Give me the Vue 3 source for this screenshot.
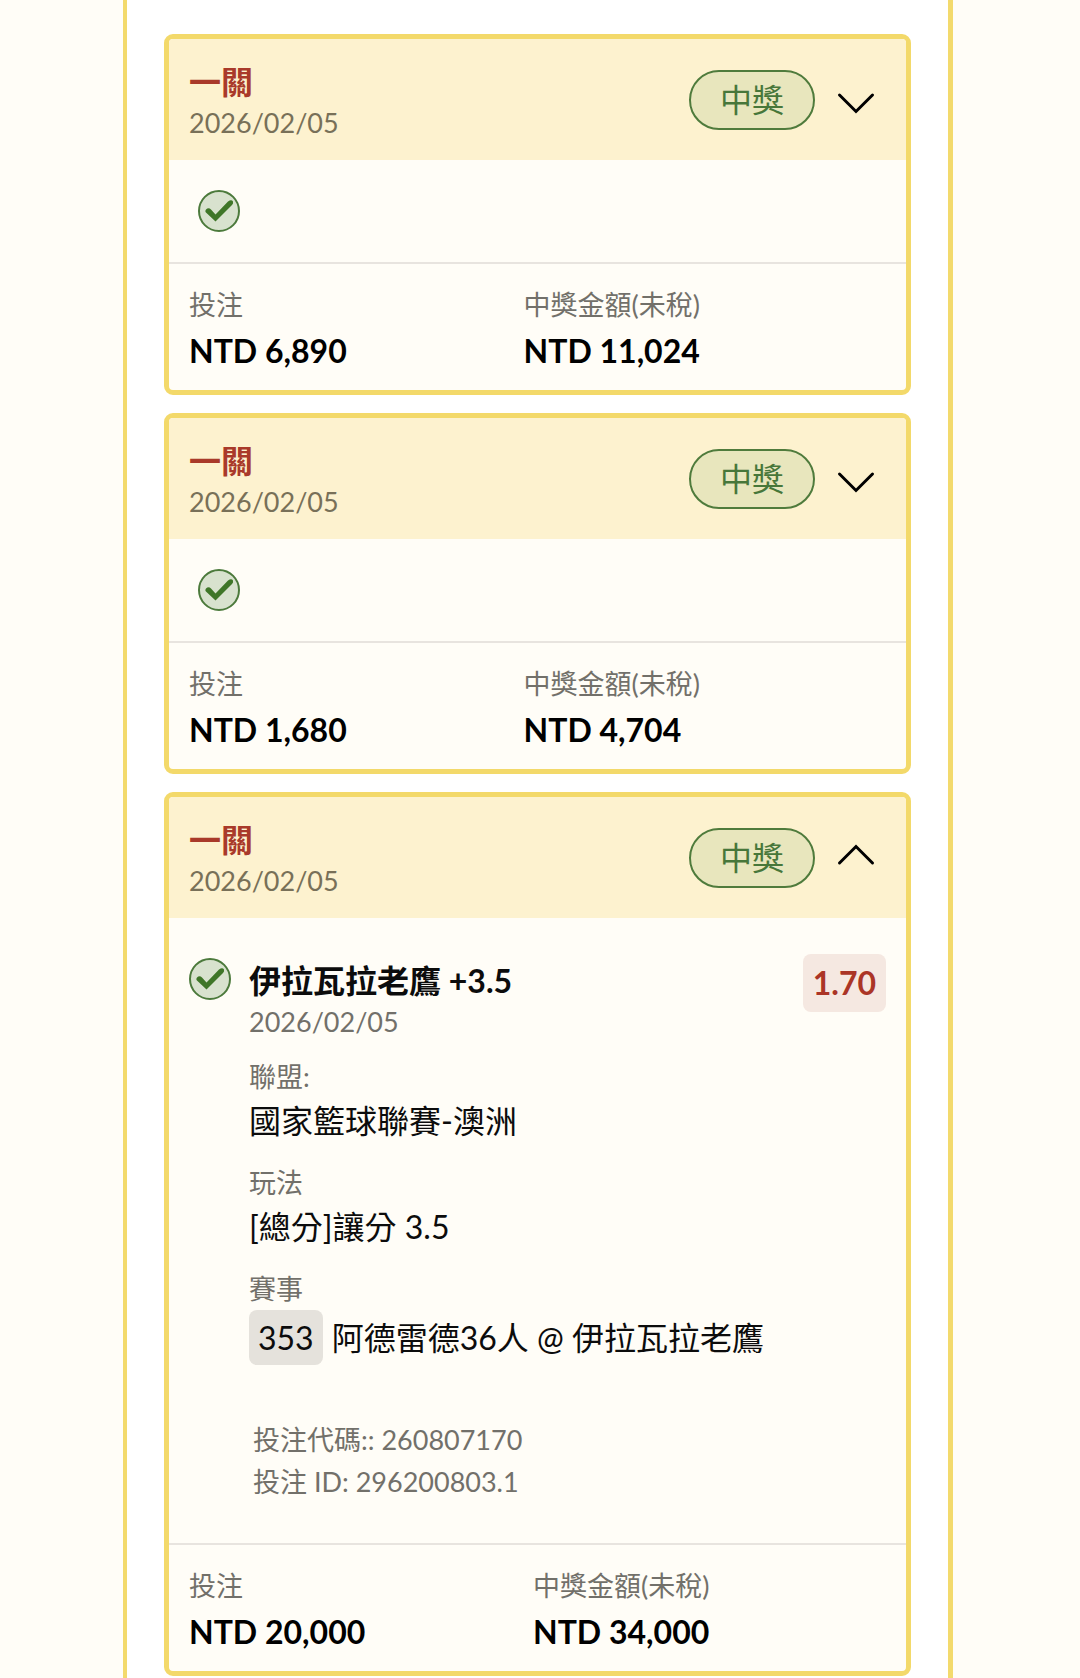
<script setup>
import { ref } from 'vue'

const bets = ref([
  { id: 1, title: '一關', date: '2026/02/05', status: '中獎', stake: 'NTD 6,890', payout: 'NTD 11,024', open: false },
  { id: 2, title: '一關', date: '2026/02/05', status: '中獎', stake: 'NTD 1,680', payout: 'NTD 4,704', open: false },
  {
    id: 3,
    title: '一關',
    date: '2026/02/05',
    status: '中獎',
    stake: 'NTD 20,000',
    payout: 'NTD 34,000',
    open: true,
    detail: {
      pick: '伊拉瓦拉老鷹 +3.5',
      date: '2026/02/05',
      odds: '1.70',
      league: '國家籃球聯賽-澳洲',
      market: '[總分]讓分 3.5',
      code: '353',
      match: '阿德雷德36人 @ 伊拉瓦拉老鷹',
      betCode: '260807170',
      betId: '296200803.1'
    }
  }
])
</script>

<template>
  <div class="page">
    <main class="panel">
      <article v-for="bet in bets" :key="bet.id" class="card" :class="{ expanded: bet.open && bet.detail }">
        <header class="head">
          <div class="heading">
            <h2 class="title">{{ bet.title }}</h2>
            <p class="muted">{{ bet.date }}</p>
          </div>
          <span class="status">{{ bet.status }}</span>
          <button class="toggle" type="button" aria-label="展開或收合" :aria-expanded="bet.open" @click="bet.open = !bet.open">
            <svg viewBox="0 0 44 44" width="44" height="44" fill="none" stroke="#000" stroke-width="3" stroke-linecap="round">
              <path d="M5.500 17 22 33.500 38.500 17" />
            </svg>
          </button>
        </header>

        <section class="body">
          <svg class="check" viewBox="0 0 42 42" width="42" height="42" fill="none">
            <circle cx="21" cy="21" r="20" fill="#d8e2ce" stroke="#4c7a3c" stroke-width="2" />
            <path d="M8 19.500Q10.500 17 13 19.500L17.500 24.500 30 11.500Q33.500 9 35 11.500 35.500 13.500 34 15L17.500 31.500 8.500 23Q6.500 21.500 8 19.500Z" fill="#3f7628" />
          </svg>
          <div v-if="bet.open && bet.detail" class="detail">
            <div class="pick-row">
              <div>
                <h3 class="pick">{{ bet.detail.pick }}</h3>
                <p class="muted">{{ bet.detail.date }}</p>
              </div>
              <span class="odds">{{ bet.detail.odds }}</span>
            </div>
            <dl class="facts">
              <div>
                <dt class="muted">聯盟:</dt>
                <dd>{{ bet.detail.league }}</dd>
              </div>
              <div>
                <dt class="muted">玩法</dt>
                <dd>{{ bet.detail.market }}</dd>
              </div>
              <div>
                <dt class="muted">賽事</dt>
                <dd class="match"><span class="code">{{ bet.detail.code }}</span>{{ bet.detail.match }}</dd>
              </div>
            </dl>
            <div class="ids">
              <p class="muted">投注代碼:: {{ bet.detail.betCode }}</p>
              <p class="muted">投注 ID: {{ bet.detail.betId }}</p>
            </div>
          </div>
        </section>

        <dl class="totals">
          <div>
            <dt class="muted">投注</dt>
            <dd class="amount">{{ bet.stake }}</dd>
          </div>
          <div>
            <dt class="muted">中獎金額(未稅)</dt>
            <dd class="amount">{{ bet.payout }}</dd>
          </div>
        </dl>
      </article>
    </main>
  </div>
</template>

<style>
body {
  margin: 0;
  background: #fffdf7;
}
</style>

<style scoped>
.page {
  box-sizing: border-box;
  padding: 0 127px 0 123px;
  color: #0c0c0c;
  font-family: Lato, "Noto Sans CJK TC", sans-serif;
  font-size: 32px;
  line-height: 40px;
}
.panel {
  box-sizing: border-box;
  min-height: 100vh;
  display: flex;
  flex-direction: column;
  gap: 18px;
  padding: 34px 37px 3px;
  background: #fff;
  border: solid #f3da6d;
  border-width: 0 5px 0 4px;
}
h2, h3, p, dl, dd {
  margin: 0;
}
.card {
  overflow: hidden;
  background: #fffdf7;
  border: 5px solid #f3d96a;
  border-radius: 9px;
}
.head {
  display: flex;
  align-items: center;
  padding: 17px 28px 16px 20px;
  background: #fdf2cf;
}
.heading {
  flex: 1;
  padding-top: 6px;
}
.title {
  color: #a93a2a;
  font-size: 32px;
  font-weight: 700;
}
.muted {
  color: #72706a;
  font-size: 27px;
  line-height: 42px;
}
.head .muted {
  color: #787058;
}
.status {
  box-sizing: border-box;
  height: 60px;
  padding: 8px 29px;
  color: #47773a;
  background: #e8e6bd;
  border: 2px solid #4f7b3c;
  border-radius: 30px;
}
.toggle {
  display: flex;
  margin-left: 19px;
  padding: 0;
  border: 0;
  background: none;
  cursor: pointer;
}
.expanded .toggle svg {
  transform: rotate(180deg);
}
.body {
  display: flex;
  align-items: flex-start;
  padding: 30px 29px;
}
.check {
  flex: none;
}
.expanded .body {
  gap: 18px;
  padding: 40px 20px;
}
.detail {
  flex: 1;
}
.pick-row {
  display: flex;
  justify-content: space-between;
  align-items: flex-start;
}
.pick {
  padding-top: 3px;
  font-size: 32px;
  font-weight: 700;
}
.odds {
  margin-top: -4px;
  padding: 9px 10px;
  color: #ab3526;
  background: #f5e8e1;
  border-radius: 8px;
  font-weight: 700;
}
.facts {
  display: grid;
  gap: 18px;
  padding-top: 13px;
}
.facts dd {
  line-height: 46px;
}
.facts .match {
  display: flex;
  align-items: center;
  gap: 9px;
}
.code {
  padding: 5px 9px 4px;
  background: #e5e2dc;
  border-radius: 8px;
}
.ids {
  padding: 54px 4px 0;
}
.totals {
  display: grid;
  grid-template-columns: 48fr 52fr;
  padding: 20px 20px 15px;
  border-top: 2px solid #e8e4df;
}
.expanded .totals {
  grid-template-columns: 1fr 1fr;
  padding-right: 29px;
}
.amount {
  padding-top: 1px;
  color: #000;
  font-weight: 700;
  line-height: 48px;
}
</style>
